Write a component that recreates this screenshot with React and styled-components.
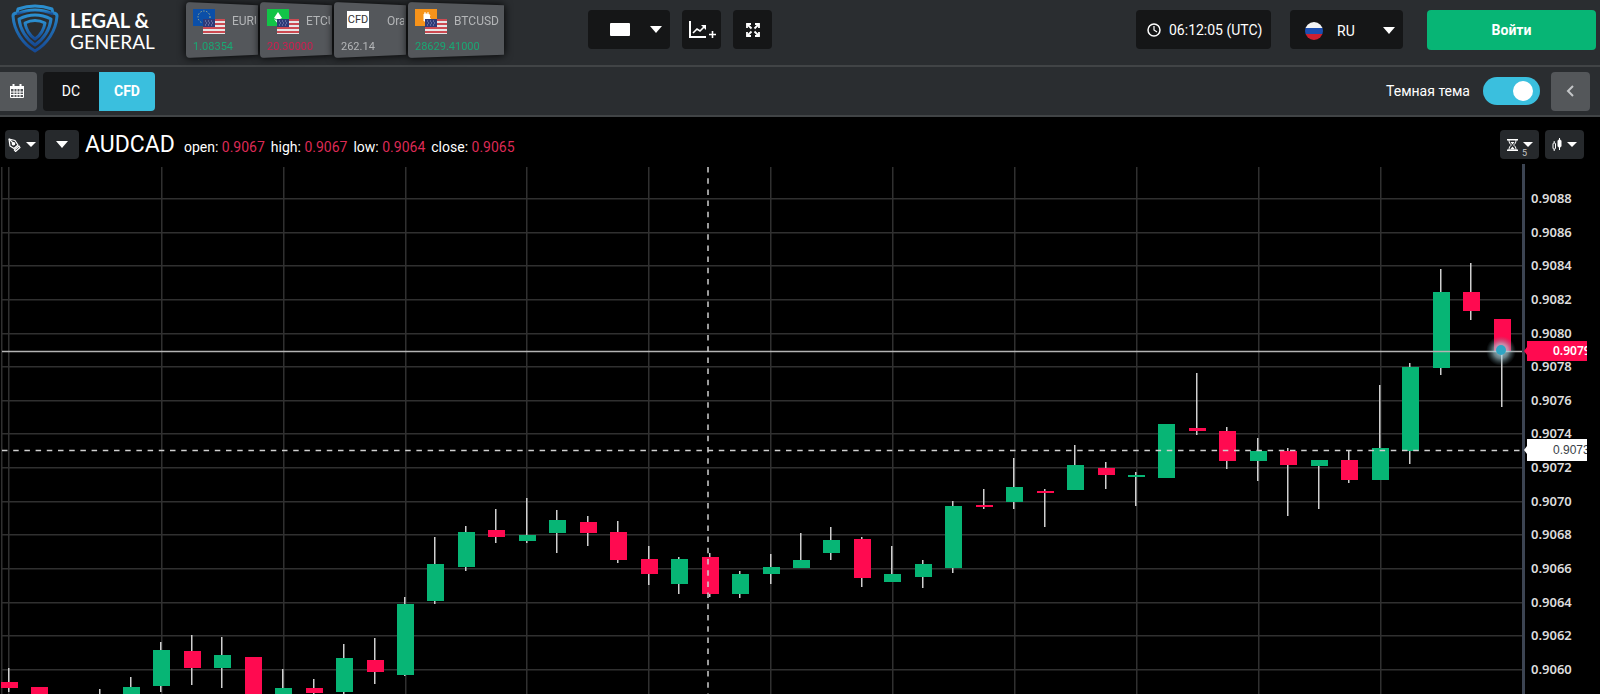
import { useState } from "react";
import styled, { createGlobalStyle } from "styled-components";

const tickers = [
  { name: "EURUSD", price: "1.08354", trend: "up", icon: "eu" },
  { name: "ETCUSD", price: "20.30000", trend: "down", icon: "etc" },
  { name: "Orange", price: "262.14", trend: "flat", icon: "cfd" },
  { name: "BTCUSD", price: "28629.41000", trend: "up", icon: "btc" },
];

const quote = [
  { label: "open", value: "0.9067" },
  { label: "high", value: "0.9067" },
  { label: "low", value: "0.9064" },
  { label: "close", value: "0.9065" },
];

const verticals = [2, 9, 162, 284, 406, 527, 649, 771, 893, 1015, 1137, 1259, 1381];

// [up or down, high, body top, body bottom, low]
const candles = [
  ["d", 668, 682, 688, 692],
  ["d", 687, 687, 700, 700],
  ["u", 700, 700, 700, 700],
  ["u", 689, 698, 700, 700],
  ["u", 677, 687, 700, 700],
  ["u", 642, 650, 686, 692],
  ["d", 635, 651, 668, 685],
  ["u", 637, 655, 668, 688],
  ["d", 657, 657, 700, 700],
  ["u", 669, 688, 700, 700],
  ["d", 679, 688, 693, 700],
  ["u", 644, 658, 692, 696],
  ["d", 638, 660, 672, 684],
  ["u", 597, 604, 675, 676],
  ["u", 537, 564, 601, 604],
  ["u", 526, 532, 567, 571],
  ["d", 509, 530, 537, 543],
  ["u", 498, 535, 541, 543],
  ["u", 510, 520, 533, 553],
  ["d", 516, 522, 533, 546],
  ["d", 521, 532, 560, 563],
  ["d", 546, 559, 574, 585],
  ["u", 557, 559, 584, 594],
  ["d", 553, 557, 594, 597],
  ["u", 571, 574, 594, 598],
  ["u", 554, 567, 574, 584],
  ["u", 533, 560, 568, 568],
  ["u", 527, 540, 553, 560],
  ["d", 537, 539, 578, 587],
  ["u", 546, 574, 582, 582],
  ["u", 560, 564, 577, 588],
  ["u", 501, 506, 568, 573],
  ["d", 489, 505, 507, 509],
  ["u", 458, 487, 502, 509],
  ["d", 489, 491, 493, 527],
  ["u", 445, 465, 490, 490],
  ["d", 462, 468, 475, 489],
  ["u", 472, 475, 477, 506],
  ["u", 424, 424, 478, 478],
  ["d", 373, 428, 431, 435],
  ["d", 427, 431, 461, 469],
  ["u", 438, 451, 461, 481],
  ["d", 448, 451, 465, 516],
  ["u", 460, 460, 466, 509],
  ["d", 451, 460, 480, 483],
  ["u", 385, 448, 480, 480],
  ["u", 363, 367, 451, 464],
  ["u", 269, 292, 368, 375],
  ["d", 263, 292, 311, 320],
  ["d", 319, 319, 352, 407],
];

const priceTicks = Array.from({ length: 15 }, (_, i) => ({
  label: (0.9088 - i * 0.0002).toFixed(4),
  y: Math.round(199 + i * 33.64),
}));

function Logo() {
  return (
    <svg width="48" height="50" viewBox="0 0 48 50" aria-hidden="true">
      <defs>
        <linearGradient id="shield" x1="0" y1="0" x2="0" y2="1">
          <stop offset="0" stopColor="#2b8fd0" />
          <stop offset="1" stopColor="#164a94" />
        </linearGradient>
      </defs>
      <g fill="none" stroke="url(#shield)" strokeWidth="3" strokeLinejoin="round">
        <path d="M7 5Q24-1 41 5L42 9Q46 9 46 12C45 27 36 40 24 47C12 40 3 27 2 12Q2 9 6 9Z" />
        <path d="M6 10Q24 2 42 10" />
        <path d="M8 15Q24 7 40 15C39 25 33 35 24 41C15 35 9 25 8 15Z" />
        <path d="M14 19Q24 14 34 19C33 25 30 31 24 35C18 31 15 25 14 19Z" />
      </g>
    </svg>
  );
}

function UsFlag() {
  return (
    <g transform="translate(10 10)">
      <rect width="22" height="15" fill="#e6e6e6" />
      {[0, 4, 8, 12].map((y) => (
        <rect key={y} y={y} width="22" height="2" fill="#cc4a52" />
      ))}
      <rect width="12" height="8" fill="#2f3b78" />
      <path d="M2 2h1M5 2h1M8 2h1M3 4h1M6 4h1M9 4h1M2 6h1M5 6h1M8 6h1" stroke="#8f98c4" />
    </g>
  );
}

function PairIcon({ kind }) {
  if (kind === "cfd") return <CfdMark>CFD</CfdMark>;
  const back = { eu: "#0b4fa8", etc: "#12c447", btc: "#f7931a" }[kind];
  return (
    <svg width="32" height="25" viewBox="0 0 32 25" aria-hidden="true">
      <rect width="22" height="17" fill={back} />
      {kind === "eu" && (
        <circle cx="11" cy="8" r="6" fill="none" stroke="#d8cf7c" strokeWidth="1" strokeDasharray="1 2" />
      )}
      {kind === "etc" && <path d="M11 3L7 9l4 2 4-2zM7 10l4 5 4-5-4 2z" fill="#fff" />}
      {kind === "btc" && (
        <path d="M9 5h3q3 0 3 2l-1 1q2 1 1 3l-2 1H9zM10 3v3M13 3v3" fill="#fff" stroke="#fff" />
      )}
      <UsFlag />
    </svg>
  );
}

function Caret() {
  return (
    <svg width="12" height="7" viewBox="0 0 12 7" aria-hidden="true">
      <path d="M0 0h12L6 7z" fill="#fff" />
    </svg>
  );
}

function ChartPlusIcon() {
  return (
    <svg width="28" height="20" viewBox="0 0 28 20" fill="none" stroke="#fff" aria-hidden="true">
      <path d="M2 1v16h16" strokeWidth="2" />
      <path d="M5 13l4-4 3 2 5-5" strokeWidth="1.6" />
      <path d="M13 5h5v5z" fill="#fff" stroke="none" />
      <path d="M24.500 11v7M21 14.500h7" strokeWidth="1.6" />
    </svg>
  );
}

function ExpandIcon() {
  return (
    <svg width="14" height="14" viewBox="0 0 14 14" fill="none" stroke="#fff" strokeWidth="1.8" aria-hidden="true">
      <path d="M1 5V1h4M9 1h4v4M1 9v4h4M9 13h4V9" />
      <path d="M1 1l4.500 4.500M13 1L8.500 5.500M1 13l4.500-4.500M13 13L8.500 8.500" />
    </svg>
  );
}

function ClockIcon() {
  return (
    <svg width="14" height="14" viewBox="0 0 14 14" fill="none" stroke="#fff" aria-hidden="true">
      <circle cx="7" cy="7" r="6" strokeWidth="1.5" />
      <path d="M7 3v4l3 2" strokeWidth="1.2" />
    </svg>
  );
}

function RuFlag() {
  return (
    <svg width="18" height="18" viewBox="0 0 18 18" aria-hidden="true">
      <clipPath id="round">
        <circle cx="9" cy="9" r="9" />
      </clipPath>
      <g clipPath="url(#round)">
        <rect width="18" height="6" fill="#f4f4f4" />
        <rect y="6" width="18" height="6" fill="#1d4fb0" />
        <rect y="12" width="18" height="6" fill="#cf2030" />
      </g>
    </svg>
  );
}

function CalendarIcon() {
  return (
    <svg width="14" height="14" viewBox="0 0 14 14" fill="none" stroke="#fff" aria-hidden="true">
      <path d="M0 2h14v3H0z" fill="#fff" stroke="none" />
      <path d="M3.5 0v3M10.5 0v3" strokeWidth="2" />
      <path d="M.5 4v9.500h13V4M4 5v8M7 5v8M10 5v8M1 8h12M1 10.500h12" />
    </svg>
  );
}

function PenIcon() {
  return (
    <svg width="13" height="14" viewBox="0 0 13 14" fill="none" stroke="#fff" strokeWidth="1.2" strokeLinejoin="round" aria-hidden="true">
      <path d="M1 1l6 1.500 3 4.500-4 3.500-4-2.500z" />
      <path d="M1 1l4 4" />
      <path d="M11 8l1 1.500-4.500 4-1.200-1.500z" />
      <circle cx="5.500" cy="5.800" r="1.2" fill="#fff" />
    </svg>
  );
}

function HourglassIcon() {
  return (
    <svg width="11" height="12" viewBox="0 0 11 12" fill="none" stroke="#fff" aria-hidden="true">
      <path d="M0 .7h11M0 11.300h11" strokeWidth="1.4" />
      <path d="M2 1c0 3 1 4 2.500 5C3 7 2 8 2 11M9 1c0 3-1 4-2.500 5C8 7 9 8 9 11" />
      <path d="M3.500 3h4L5.500 5.500zM3 10.500l2.500-3 2.500 3z" fill="#fff" stroke="none" />
    </svg>
  );
}

function CandlesIcon() {
  return (
    <svg width="10" height="14" viewBox="0 0 10 14" fill="none" stroke="#fff" aria-hidden="true">
      <rect x="1" y="5" width="2.500" height="6" rx="1" />
      <path d="M2.200 3v2M2.200 11v2M7.500 0v12" />
      <rect x="6" y="2" width="3" height="7" rx="1" fill="#fff" />
    </svg>
  );
}

function PriceTag({ y, height, fill, color, children, family, weight }) {
  const top = y - height / 2;
  return (
    <g>
      <path d={`M1524 ${y}l3-4V${top}h60v${height}h-60V${y + 4}z`} fill={fill} />
      <text x="1553" y={y + 4} fill={color} fontFamily={family} fontWeight={weight} fontSize="12" clipPath="url(#tagclip)">
        {children}
      </text>
    </g>
  );
}

function Chart() {
  return (
    <Canvas viewBox="0 164 1600 530" preserveAspectRatio="xMaxYMin slice" role="img" aria-label="AUDCAD">
      <defs>
        <clipPath id="tagclip">
          <rect x="1528" y="164" width="59" height="530" />
        </clipPath>
        <radialGradient id="glow">
          <stop offset="0" stopColor="#bfe9f5" stopOpacity="0.9" />
          <stop offset="0.5" stopColor="#a9cfda" stopOpacity="0.6" />
          <stop offset="1" stopColor="#5f7f88" stopOpacity="0" />
        </radialGradient>
      </defs>

      <g fill="#303030">
        {priceTicks.map((t) => (
          <rect key={t.label} x="2" y={t.y - 1} width="1520" height="1.5" />
        ))}
        {verticals.map((x) => (
          <rect key={x} x={x - 1} y="167" width="1.5" height="527" />
        ))}
      </g>

      {candles.map(([dir, high, top, bottom, low], i) => {
        const x = Math.round(9 + i * 30.46);
        return (
          <g key={i}>
            <rect x={x - 1} y={high} width="1.5" height={low - high} fill="#cfcfcf" />
            <rect x={x - 8} y={top} width="17" height={bottom - top} fill={dir === "u" ? "#07b575" : "#ff0a50"} />
          </g>
        );
      })}

      <path d="M2 351.500H1524" stroke="#b4b4b4" strokeWidth="1.5" />
      <path d="M2 450.500H1524" stroke="#d0d0d0" strokeWidth="1.5" strokeDasharray="5.5 5.7" />
      <path d="M708 167V694" stroke="#d0d0d0" strokeWidth="1.5" strokeDasharray="5.5 5.7" />
      <circle cx="1501" cy="351" r="15" fill="url(#glow)" />
      <circle cx="1501" cy="350" r="5" fill="#2fa5c4" />

      <rect x="1522" y="164" width="3" height="530" fill="#3c4452" />
      <g fill="#dcdcdc" fontFamily="'Noto Sans', sans-serif" fontSize="13" fontWeight="600">
        {priceTicks.map((t) => (
          <text key={t.label} x="1531" y={t.y + 4}>
            {t.label}
          </text>
        ))}
      </g>
      <PriceTag y={351} height={20} fill="#ff0a50" color="#fff" family="'Noto Sans', sans-serif" weight="600">
        0.9079
      </PriceTag>
      <PriceTag y={450} height={22} fill="#fff" color="#3a3f48" family="'Liberation Sans', sans-serif" weight="400">
        0.9073
      </PriceTag>
    </Canvas>
  );
}

function App() {
  const [market, setMarket] = useState("CFD");
  const [dark, setDark] = useState(true);

  return (
    <>
      <GlobalStyle />
      <Page>
        <Header>
          <Brand href="#">
            <Logo />
            <BrandName>
              <b>LEGAL &amp;</b>
              <span>GENERAL</span>
            </BrandName>
          </Brand>

          <Tickers>
            {tickers.map((t) => (
              <Ticker key={t.name}>
                <TickerTop $inset={t.icon === "cfd"}>
                  <PairIcon kind={t.icon} />
                  <span>{t.name}</span>
                </TickerTop>
                <TickerPrice $trend={t.trend}>{t.price}</TickerPrice>
              </Ticker>
            ))}
          </Tickers>

          <Tools>
            <AccountButton aria-label="Account">
              <Blank />
              <Caret />
            </AccountButton>
            <ToolButton aria-label="Add chart">
              <ChartPlusIcon />
            </ToolButton>
            <ToolButton aria-label="Fullscreen">
              <ExpandIcon />
            </ToolButton>
          </Tools>

          <Right>
            <Clock>
              <ClockIcon />
              <time>06:12:05 (UTC)</time>
            </Clock>
            <Language>
              <RuFlag />
              <select aria-label="Language" defaultValue="RU">
                <option>RU</option>
                <option>EN</option>
              </select>
              <Caret />
            </Language>
            <LoginButton>Войти</LoginButton>
          </Right>
        </Header>

        <SubBar>
          <CalendarButton aria-label="Calendar">
            <CalendarIcon />
          </CalendarButton>
          <Segment>
            {["DC", "CFD"].map((m) => (
              <SegmentButton key={m} $active={market === m} onClick={() => setMarket(m)}>
                {m}
              </SegmentButton>
            ))}
          </Segment>
          <ThemeLabel>
            Темная тема
            <Switch type="checkbox" checked={dark} onChange={() => setDark(!dark)} />
          </ThemeLabel>
          <CollapseButton aria-label="Collapse">
            <svg width="9" height="14" viewBox="0 0 9 14" fill="none" stroke="#c4c6c8" strokeWidth="2">
              <path d="M7 2L2 7l5 5" />
            </svg>
          </CollapseButton>
        </SubBar>

        <ChartBar>
          <SmallButton aria-label="Draw">
            <PenIcon />
            <SmallCaret />
          </SmallButton>
          <SmallButton aria-label="Choose pair">
            <Caret />
          </SmallButton>
          <Quote>
            <h1>AUDCAD</h1>
            {quote.map((q) => (
              <span key={q.label}>
                {q.label}: <em>{q.value}</em>
              </span>
            ))}
          </Quote>
          <SmallButton $wide aria-label="Interval">
            <HourglassIcon />
            <SmallCaret />
            <Interval>5</Interval>
          </SmallButton>
          <SmallButton $wide aria-label="Chart type">
            <CandlesIcon />
            <SmallCaret />
          </SmallButton>
        </ChartBar>

        <Chart />
      </Page>
    </>
  );
}

export default App;

const GlobalStyle = createGlobalStyle`
  * {
    box-sizing: border-box;
  }
  body {
    margin: 0;
    background: #000;
    color: #fff;
    font-family: Roboto, "Noto Sans", sans-serif;
    font-size: 14px;
  }
  button, select, input {
    font: inherit;
    color: inherit;
    border: none;
    margin: 0;
    padding: 0;
    cursor: pointer;
  }
`;

const Page = styled.main`
  display: flex;
  flex-direction: column;
  height: 100vh;
  overflow: hidden;
`;

/* header */
const Header = styled.header`
  display: flex;
  flex: none;
  height: 67px;
  padding: 0 4px 0 11px;
  background: #2a2d30;
  border-bottom: 2px solid #414446;
`;

const Brand = styled.a`
  display: flex;
  gap: 11px;
  width: 175px;
  padding-top: 4px;
  color: #fff;
  text-decoration: none;
`;

const BrandName = styled.div`
  display: flex;
  flex-direction: column;
  padding-top: 6px;
  font-family: Lato, sans-serif;
  font-size: 19px;
  line-height: 21px;

  b {
    font-size: 20px;
  }
`;

const Tickers = styled.div`
  display: flex;
  padding: 2px 0 0;
`;

const Ticker = styled.div`
  position: relative;
  width: 74px;
  height: 56px;
  padding: 6px 4px 0 7px;
  color: #b4b6b8;
  font-size: 12px;
  white-space: nowrap;
  filter: drop-shadow(0 0 4px #000);

  /* tilted card behind the text */
  &::before {
    content: "";
    position: absolute;
    inset: 0 2px 0 0;
    z-index: -1;
    background: #54575b;
    border-radius: 4px;
    clip-path: polygon(0 0, 100% 6%, 100% 94%, 0 100%);
  }
  &:last-child {
    width: 98px;
  }
`;

const TickerTop = styled.div`
  display: flex;
  align-items: center;
  gap: ${(p) => (p.$inset ? "18px" : "7px")};
  height: 26px;
  padding-left: ${(p) => (p.$inset ? "6px" : "0")};

  svg, i {
    flex: none;
  }
  span {
    min-width: 0;
    overflow: hidden;
  }
`;

const CfdMark = styled.i`
  width: 22px;
  height: 17px;
  margin-bottom: 4px;
  background: #fff;
  color: #333;
  font-size: 11px;
  font-style: normal;
  line-height: 17px;
  text-align: center;
`;

const trendColors = { up: "#1aa873", down: "#d01f50", flat: "#b4b6b8" };

const TickerPrice = styled.div`
  margin-top: 6px;
  color: ${(p) => trendColors[p.$trend]};
  font-size: 11px;
  line-height: 14px;
`;

const Tools = styled.div`
  display: flex;
  gap: 12px;
  margin: 10px 0 0 82px;
`;

const ToolButton = styled.button`
  display: flex;
  align-items: center;
  justify-content: center;
  width: 39px;
  height: 39px;
  background: #151617;
  border-radius: 4px;
`;

const AccountButton = styled(ToolButton)`
  justify-content: flex-end;
  gap: 20px;
  width: 82px;
  padding-right: 8px;
`;

const Blank = styled.span`
  width: 20px;
  height: 13px;
  background: #fff;
  border-radius: 1px;
`;

const Right = styled.div`
  display: flex;
  margin: 10px 0 0 auto;
`;

const Clock = styled.div`
  display: flex;
  align-items: center;
  gap: 8px;
  height: 39px;
  width: 135px;
  padding-left: 11px;
  background: #151617;
  border-radius: 4px;
  white-space: nowrap;
`;

const Language = styled.label`
  display: flex;
  align-items: center;
  width: 113px;
  height: 39px;
  margin: 0 24px 0 19px;
  padding: 2px 8px 0 15px;
  background: #151617;
  border-radius: 4px;

  select {
    flex: 1;
    padding-left: 14px;
    appearance: none;
    background: transparent;
    outline: none;
  }
`;

const LoginButton = styled.button`
  width: 169px;
  height: 40px;
  background: #07b575;
  border-radius: 4px;
  font-weight: 700;
`;

/* second bar */
const SubBar = styled.div`
  display: flex;
  align-items: center;
  flex: none;
  height: 50px;
  padding-right: 10px;
  background: #2a2d30;
  border-bottom: 2px solid #414446;
`;

const CalendarButton = styled(ToolButton)`
  width: 37px;
  padding-right: 3px;
  background: #54575a;
  border-radius: 0 4px 4px 0;
`;

const Segment = styled.div`
  display: flex;
  margin-left: 6px;
  border-radius: 4px;
  overflow: hidden;
`;

const SegmentButton = styled.button`
  width: 56px;
  height: 39px;
  background: ${(p) => (p.$active ? "#3abfde" : "#151617")};
  font-weight: ${(p) => (p.$active ? 700 : 400)};
`;

const ThemeLabel = styled.label`
  display: flex;
  align-items: center;
  gap: 13px;
  margin-left: auto;
`;

const Switch = styled.input`
  appearance: none;
  width: 57px;
  height: 28px;
  padding: 4px 7px;
  background: #3abfde;
  border-radius: 14px;

  &::before {
    content: "";
    display: block;
    width: 20px;
    height: 20px;
    margin-left: ${(p) => (p.checked ? "auto" : "0")};
    background: #fff;
    border-radius: 50%;
  }
`;

const CollapseButton = styled(ToolButton)`
  margin-left: 11px;
  background: #54575a;
`;

/* chart toolbar */
const ChartBar = styled.div`
  display: flex;
  align-items: center;
  flex: none;
  gap: 6px;
  height: 47px;
  padding: 8px 16px 0 5px;
`;

const SmallButton = styled.button`
  position: relative;
  display: flex;
  align-items: center;
  justify-content: center;
  gap: 5px;
  width: ${(p) => (p.$wide ? "39px" : "34px")};
  height: 29px;
  background: #26292c;
  border-radius: 4px;
`;

const SmallCaret = styled.i`
  border: 5px solid transparent;
  border-top-color: #fff;
  border-bottom: none;
`;

const Interval = styled.sub`
  position: absolute;
  right: 12px;
  bottom: 1px;
  color: #c8c8c8;
  font-size: 9px;
  line-height: 9px;
`;

const Quote = styled.div`
  display: flex;
  align-items: baseline;
  flex: 1;
  gap: 6px;
  white-space: nowrap;

  h1 {
    margin: 0 3px 0 0;
    font-size: 23px;
    font-weight: 400;
    line-height: 28px;
  }
  em {
    color: #dc2a55;
    font-style: normal;
  }
`;

/* chart */
const Canvas = styled.svg`
  display: block;
  flex: 1;
  width: 100%;
  min-height: 0;
`;
